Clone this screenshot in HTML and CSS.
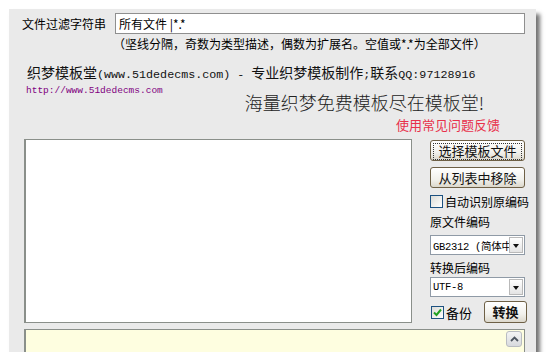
FILE: index.html
```html
<!DOCTYPE HTML>
<html>
	<head>
		<meta charset="utf-8">
		<title>模板编码转换</title>
		<link rel="stylesheet" href="styles.css">
	</head>
	<body>
		<div class="window">
			<div class="filter-row">
				<span class="filter-label">文件过滤字符串</span>
				<div class="text-field">所有文件 |*.*</div>
			</div>
			<div class="hint">（坚线分隔，奇数为类型描述，偶数为扩展名。空值或*.*为全部文件）</div>
			<div class="info">织梦模板堂<span class="en">(www.51dedecms.com) - </span>专业织梦模板制作<span class="en">;</span>联系<span class="en">QQ:97128916</span></div>
			<div class="promo">
				<span class="url">http://www.51dedecms.com</span>
				<span class="slogan">海量织梦免费模板尽在模板堂!</span>
			</div>
			<div class="feedback">使用常见问题反馈</div>

			<div class="main">
				<div class="file-list"></div>
				<div class="side">
					<div class="btn btn-focus"><span>选择模板文件</span></div>
					<div class="btn btn-second">从列表中移除</div>
					<div class="check-row"><span class="check"></span>自动识别原编码</div>
					<div class="side-label">原文件编码</div>
					<div class="select"><span class="select-text">GB2312 (简体中</span><span class="select-arrow"></span></div>
					<div class="side-label label-second">转换后编码</div>
					<div class="select select-second"><span class="select-text">UTF-8</span><span class="select-arrow"></span></div>
					<div class="bottom-row">
						<div class="check-row backup"><span class="check checked">
							<svg width="9" height="9" viewBox="0 0 9 9"><path d="M1 4.5 L3.5 7 L8 1.5" fill="none" stroke="#21a121" stroke-width="2"/></svg>
						</span>备份</div>
						<div class="btn btn-convert">转换</div>
					</div>
				</div>
			</div>

			<div class="log">
				<span class="scroll-up">
					<svg width="9" height="6" viewBox="0 0 9 6"><path d="M1 5 L4.5 1.5 L8 5" fill="none" stroke="#4d5560" stroke-width="1.8"/></svg>
				</span>
			</div>
		</div>
	</body>
</html>
```
FILE: styles.css
```css
body
{
	margin:0;
	background-color:#ffffff;
	font-family:"Noto Sans CJK SC", sans-serif;
	font-size:12px;
	color:#000000;
}

.window
{
	margin:9px 0 0 9px;
	width:527px;
	height:343px;
	box-sizing:border-box;
	padding:4px 11px 0 15px;
	background-color:#eaeaea;
	box-shadow:4px 5px 4px rgba(0,0,0,0.55);
	overflow:hidden;
}

.filter-row
{
	display:flex;
	align-items:center;
	height:21px;
}

.filter-label
{
	width:91px;
	margin-left:-2px;
	padding-right:2px;
}

.text-field
{
	width:410px;
	height:21px;
	box-sizing:border-box;
	border:1px solid #8f8f8f;
	background-color:white;
	line-height:19px;
	padding-left:3px;
}

.hint
{
	margin-top:2px;
	height:16px;
	line-height:16px;
	padding-left:89px;
	white-space:nowrap;
}

.info
{
	margin-top:12px;
	height:16px;
	line-height:16px;
	padding-left:3px;
	font-size:14px;
	white-space:nowrap;
	color:#111111;
}

.en
{
	font-family:"Liberation Mono", monospace;
	font-size:11.7px;
}

.promo
{
	display:flex;
	justify-content:space-between;
	align-items:flex-start;
	height:33px;
}

.url
{
	margin-top:4px;
	margin-left:2px;
	line-height:14px;
	font-family:"Liberation Mono", monospace;
	font-size:9.5px;
	color:#800080;
}

.slogan
{
	margin-top:11px;
	margin-right:41px;
	line-height:22px;
	font-size:18px;
	font-weight:300;
	color:#222222;
	white-space:nowrap;
}

.feedback
{
	margin-top:4px;
	height:16px;
	line-height:16px;
	text-align:right;
	padding-right:25px;
	font-size:13px;
	color:#e8304a;
}

.main
{
	margin-top:6px;
	display:grid;
	grid-template-columns:388px 95px;
	column-gap:18px;
	height:183px;
}

.file-list
{
	background-color:white;
	border:1px solid #8a8f8a;
	border-width:1px 1px 1px 2px;
}

.side
{
	display:flex;
	flex-direction:column;
}

.btn
{
	height:21px;
	box-sizing:border-box;
	border:1px solid #6e6046;
	border-radius:3px;
	background:linear-gradient(#ffffff, #f2f1ec 60%, #dcd8cc);
	text-align:center;
	line-height:19px;
	font-size:13px;
	color:#111111;
}

.btn-focus
{
	margin-top:1px;
	padding:2px;
}

.btn-focus span
{
	display:block;
	height:15px;
	line-height:14px;
	border:1px dotted #333333;
}

.btn-second
{
	margin-top:6px;
}

.check-row
{
	display:flex;
	align-items:center;
	height:16px;
	margin-top:5px;
	font-size:12px;
	white-space:nowrap;
}

.check
{
	flex-shrink:0;
	width:11px;
	height:11px;
	margin-right:2px;
	border:1px solid #1c5180;
	background:linear-gradient(135deg, #dcdcd7, #ffffff);
	display:flex;
	align-items:center;
	justify-content:center;
}

.side-label
{
	height:16px;
	line-height:16px;
	margin-top:5px;
	font-size:12px;
}

.select
{
	margin-top:5px;
	height:20px;
	box-sizing:border-box;
	border:1px solid #8f9aa6;
	background-color:white;
	display:flex;
	align-items:center;
	overflow:hidden;
}

.select-second
{
	margin-top:1px;
}

.select-text
{
	flex:1;
	overflow:hidden;
	white-space:nowrap;
	padding-left:2px;
	font-family:"Liberation Mono", "Noto Sans CJK SC", monospace;
	font-size:10.5px;
	letter-spacing:-0.3px;
}

.select-arrow
{
	flex-shrink:0;
	width:14px;
	height:16px;
	margin-right:1px;
	box-sizing:border-box;
	border:1px solid #b9b9b9;
	background:linear-gradient(#ffffff, #e4e4e4);
	position:relative;
}

.select-arrow::after
{
	content:"";
	position:absolute;
	left:3px;
	top:6px;
	border-left:3.5px solid transparent;
	border-right:3.5px solid transparent;
	border-top:4px solid #111111;
}

.bottom-row
{
	margin-top:4px;
	display:flex;
	align-items:center;
	justify-content:space-between;
	height:22px;
}

.backup
{
	margin-top:0;
	margin-left:1px;
	font-size:13px;
}

.btn-convert
{
	width:43px;
	height:22px;
	margin-right:-2px;
	line-height:20px;
	font-weight:bold;
	font-size:13px;
}

.log
{
	margin-top:7px;
	height:40px;
	box-sizing:border-box;
	border:1px solid #8a8f8a;
	border-width:1px 1px 1px 2px;
	background-color:#fefee0;
	display:flex;
	justify-content:flex-end;
	align-items:flex-start;
	padding:1px 2px 0 0;
}

.scroll-up
{
	width:16px;
	height:16px;
	box-sizing:border-box;
	border:1px solid #b9bcc2;
	border-radius:3px;
	background:linear-gradient(#f4f4f4, #d8dade);
	display:flex;
	align-items:center;
	justify-content:center;
}
```
